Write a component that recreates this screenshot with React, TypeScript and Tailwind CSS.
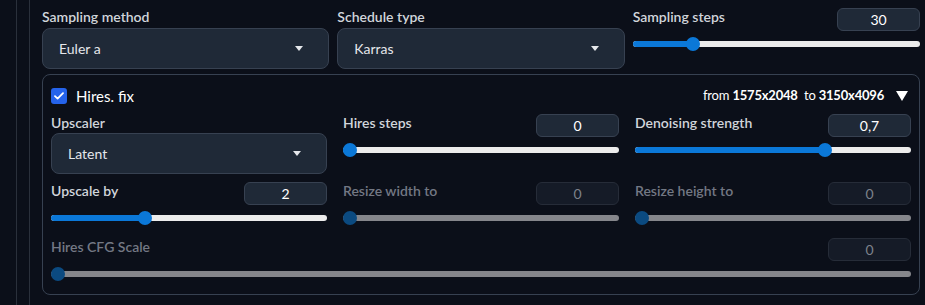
const FONT = "font-['Lato','Liberation_Sans',sans-serif]";

function Caret() {
  return (
    <svg width="8" height="5" viewBox="0 0 8 5" className="shrink-0">
      <path d="M0 0h8L4 5z" fill="#e5e7eb" />
    </svg>
  );
}

function Dropdown({ label, value, labelH = 'h-[20px]' }: { label: string; value: string; labelH?: string }) {
  return (
    <div className="flex flex-col">
      <div className={`${labelH} text-[14px] leading-[18px] font-semibold text-[#d1d5db]`}>{label}</div>
      <div className="h-[41px] flex items-center justify-between rounded-lg border border-[#374151] bg-[#1f2937] pl-[16px] pr-[25px]">
        <span className="text-[14px] text-[#e5e7eb]">{value}</span>
        <Caret />
      </div>
    </div>
  );
}

function Track({ pct, disabled }: { pct: number; disabled?: boolean }) {
  return (
    <div className="relative h-[14px] flex items-center">
      <div className={`h-[6px] w-full rounded-full ${disabled ? 'bg-[#85868b]' : 'bg-[#ececec]'}`} />
      {!disabled && (
        <div
          className="absolute left-0 h-[6px] rounded-full bg-[#0b78d8]"
          style={{ width: `calc(7px + ${pct} * (100% - 14px))` }}
        />
      )}
      <div
        className={`absolute top-0 h-[14px] w-[14px] rounded-full ${disabled ? 'bg-[#0b4a80]' : 'bg-[#0b78d8]'}`}
        style={{ left: `calc(${pct} * (100% - 14px))` }}
      />
    </div>
  );
}

function SliderField({
  label,
  value,
  pct,
  disabled,
  className = '',
}: {
  label: string;
  value: string;
  pct: number;
  disabled?: boolean;
  className?: string;
}) {
  return (
    <div className={`h-[48px] flex flex-col ${className}`}>
      <div className="h-[23px] flex justify-between items-start">
        <span className={`text-[14px] leading-[18px] font-semibold ${disabled ? 'text-[#737884]' : 'text-[#d1d5db]'}`}>
          {label}
        </span>
        <div
          className={`w-[83px] h-[23px] rounded-[6px] border text-center text-[14px] leading-[21px] ${
            disabled ? 'border-[#262c38] bg-[#151b27] text-[#7d828b]' : 'border-[#374151] bg-[#1f2937] text-white'
          }`}
        >
          {value}
        </div>
      </div>
      <div className="mt-[6px]">
        <Track pct={pct} disabled={disabled} />
      </div>
    </div>
  );
}

export default function App() {
  return (
    <div className={`w-[925px] h-[305px] overflow-hidden bg-[#0b0f19] flex ${FONT}`}>
      <div className="ml-[16px] border-l border-[#2a303b] flex-1 flex">
        <div className="ml-[12px] border-l border-[#2a303b] flex-1 pl-[12px] pr-[5px] pt-[8px]">
          {/* Sampler row */}
          <div className="grid grid-cols-3 gap-x-2">
            <Dropdown label="Sampling method" value="Euler a" />
            <Dropdown label="Schedule type" value="Karras" />
            <SliderField label="Sampling steps" value="30" pct={0.196} />
          </div>

          {/* Hires. fix panel */}
          <div className="mt-[5px] rounded-lg border border-[#374151] px-[8px] pt-[11px] pb-[8px]">
            <div className="h-[20px] flex items-center justify-between">
              <label className="flex items-center gap-[9px]">
                <span className="w-[16px] h-[16px] rounded-[3px] bg-[#2563eb] flex items-center justify-center">
                  <svg width="10" height="8" viewBox="0 0 10 8">
                    <path d="M1 4.2l2.6 2.4L9 1.2" stroke="white" strokeWidth="1.8" fill="none" strokeLinecap="round" strokeLinejoin="round" />
                  </svg>
                </span>
                <span className="text-[15px] text-white">Hires. fix</span>
              </label>
              <div className="flex items-center gap-[12px] pr-[3px]">
                <span className="text-[13px] tracking-[-0.2px] text-white">
                  from <b className="font-bold">1575x2048</b>&nbsp; to <b className="font-bold">3150x4096</b>
                </span>
                <svg width="12" height="10" viewBox="0 0 12 10">
                  <path d="M0 0h12L6 10z" fill="white" />
                </svg>
              </div>
            </div>

            <div className="mt-[8px] grid grid-cols-3 gap-x-[16px] gap-y-[8px]">
              <Dropdown label="Upscaler" value="Latent" labelH="h-[19px]" />
              <SliderField label="Hires steps" value="0" pct={0} />
              <SliderField label="Denoising strength" value="0,7" pct={0.7} />
              <SliderField label="Upscale by" value="2" pct={1 / 3} />
              <SliderField label="Resize width to" value="0" pct={0} disabled />
              <SliderField label="Resize height to" value="0" pct={0} disabled />
              <SliderField label="Hires CFG Scale" value="0" pct={0} disabled className="col-span-3" />
            </div>
          </div>
        </div>
      </div>
    </div>
  );
}
